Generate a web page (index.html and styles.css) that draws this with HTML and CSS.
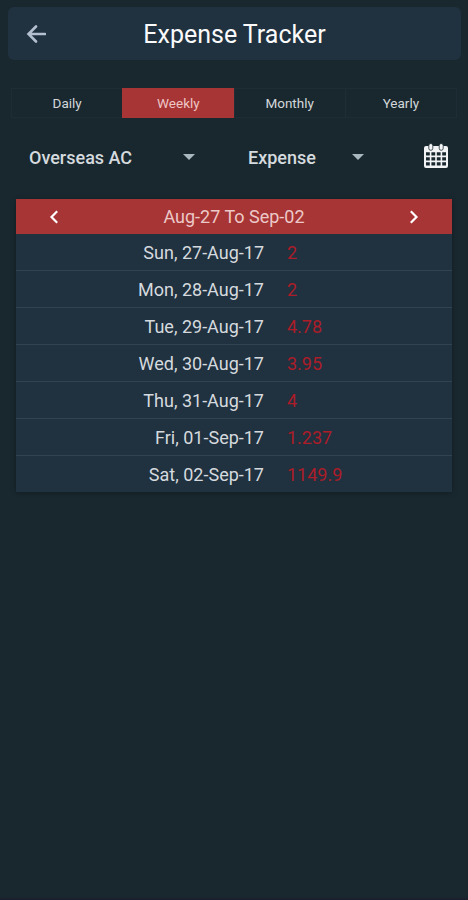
FILE: index.html
```html
<!DOCTYPE html>
<html lang="en">
<head>
  <meta charset="UTF-8">
  <meta name="viewport" content="width=device-width, initial-scale=1.0">
  <title>Expense Tracker</title>
  <link rel="stylesheet" href="styles.css">
</head>
<body>
  <div class="app">
    <!-- Title bar -->
    <header class="app-bar">
      <svg class="back" viewBox="0 0 20 18" width="20" height="18">
        <path d="M19 9H2.500M10 1.500L2.500 9l7.500 7.500"/>
      </svg>
      <h1>Expense Tracker</h1>
    </header>

    <!-- Period tabs -->
    <nav class="tabs">
      <a class="tab">Daily</a>
      <a class="tab active">Weekly</a>
      <a class="tab">Monthly</a>
      <a class="tab">Yearly</a>
    </nav>

    <!-- Filters -->
    <div class="filters">
      <div class="select account"><span>Overseas AC</span><i class="caret"></i></div>
      <div class="select type"><span>Expense</span><i class="caret"></i></div>
      <svg class="calendar" viewBox="0 0 24 25" width="24" height="25">
        <path class="sheet" fill-rule="evenodd" d="M2 3h20q2 0 2 2v18q0 2-2 2H2q-2 0-2-2V5q0-2 2-2z
          M2 9.200v3.400h3.800V9.200z M7.400 9.200v3.400h3.800V9.200z M12.800 9.200v3.400h3.800V9.200z M18.200 9.200v3.400H22V9.200z
          M2 14.200v3.400h3.800v-3.400z M7.400 14.200v3.400h3.800v-3.400z M12.800 14.200v3.400h3.800v-3.400z M18.200 14.200v3.400H22v-3.400z
          M2 19.200v3.400h3.800v-3.400z M7.400 19.200v3.400h3.800v-3.400z M12.800 19.200v3.400h3.800v-3.400z M18.200 19.200v3.400H22v-3.400z"/>
        <rect class="ring" x="4.800" y=".5" width="4" height="6.800" rx="2"/>
        <rect class="ring" x="15.200" y=".5" width="4" height="6.800" rx="2"/>
      </svg>
    </div>

    <!-- Week list -->
    <section class="week">
      <div class="week-head">
        <svg class="arrow" viewBox="0 0 10 14" width="10" height="14"><path d="M8.200 1.300L2.500 7l5.700 5.700"/></svg>
        <span>Aug-27 To Sep-02</span>
        <svg class="arrow" viewBox="0 0 10 14" width="10" height="14"><path d="M1.800 1.300L7.500 7l-5.700 5.700"/></svg>
      </div>
      <div class="row"><span class="date">Sun, 27-Aug-17</span><span class="amount">2</span></div>
      <div class="row"><span class="date">Mon, 28-Aug-17</span><span class="amount">2</span></div>
      <div class="row"><span class="date">Tue, 29-Aug-17</span><span class="amount">4.78</span></div>
      <div class="row"><span class="date">Wed, 30-Aug-17</span><span class="amount">3.95</span></div>
      <div class="row"><span class="date">Thu, 31-Aug-17</span><span class="amount">4</span></div>
      <div class="row"><span class="date">Fri, 01-Sep-17</span><span class="amount">1.237</span></div>
      <div class="row"><span class="date">Sat, 02-Sep-17</span><span class="amount">1149.9</span></div>
    </section>
  </div>
</body>
</html>
```
FILE: styles.css
```css
* {
  box-sizing: border-box;
}

body {
  margin: 0;
  background-color: #19282f;
  color: #d5dade;
  font-family: Roboto, sans-serif;
}

.app {
  height: 900px;
  padding: 7px 7px 0 8px;
  border-bottom: 2px solid #1b202c;
  overflow: hidden;
}

/* Title bar */
.app-bar {
  display: grid;
  grid-template-columns: 1fr auto 1fr;
  align-items: center;
  height: 53px;
  padding-left: 18px;
  background-color: #203140;
  border-radius: 6px;
}

.app-bar h1 {
  margin: 1px 0 0 -18px;
  font-size: 25px;
  font-weight: 400;
  color: #fafafa;
}

.back {
  fill: none;
  stroke: #b4c0d0;
  stroke-width: 2.6;
  stroke-linecap: round;
}

/* Period tabs */
.tabs {
  display: flex;
  height: 30px;
  margin: 28px 4px 0 3px;
  border: 1px solid #1e2c35;
}

.tab {
  flex: 1;
  display: flex;
  align-items: center;
  justify-content: center;
  font-size: 13.5px;
  color: #d3d7da;
}

.tab + .tab {
  border-left: 1px solid #1f2e36;
}

.tab.active {
  margin: -1px 0;
  background-color: #a83535;
  border-color: #a83535;
  color: #eec6c6;
}

/* Filters */
.filters {
  display: flex;
  align-items: center;
  height: 40px;
  margin: 19px 0 0 21px;
}

.select {
  display: flex;
  align-items: center;
  justify-content: space-between;
  font-size: 18px;
  font-weight: 500;
}

.account {
  width: 166px;
}

.type {
  width: 116px;
  margin-left: 53px;
}

.caret {
  border: 6px solid transparent;
  border-top-color: #a9b7bf;
  border-bottom: 0;
}

.calendar {
  margin: -4px 0 0 60px;
}

.sheet {
  fill: #f2f4f5;
}

.ring {
  fill: #f2f4f5;
  stroke: #19282f;
  stroke-width: 0.8;
}

/* Week list */
.week {
  margin: 22px 9px 0 8px;
  background-color: #203140;
  box-shadow: 0 1px 5px rgba(0, 0, 0, 0.3);
}

.week-head {
  display: flex;
  align-items: center;
  justify-content: space-between;
  height: 35px;
  padding: 0 33px;
  background-color: #a83535;
  font-size: 18px;
  color: #ecc9c8;
}

.arrow {
  fill: none;
  stroke: #fff;
  stroke-width: 2.2;
}

.row {
  display: flex;
  align-items: center;
  gap: 23px;
  height: 37px;
  font-size: 18px;
}

.week-head + .row {
  height: 36px;
}

.row + .row {
  border-top: 1px solid #32434f;
}

.date {
  width: 248px;
  text-align: right;
}

.amount {
  color: #ab1d28;
}
```
